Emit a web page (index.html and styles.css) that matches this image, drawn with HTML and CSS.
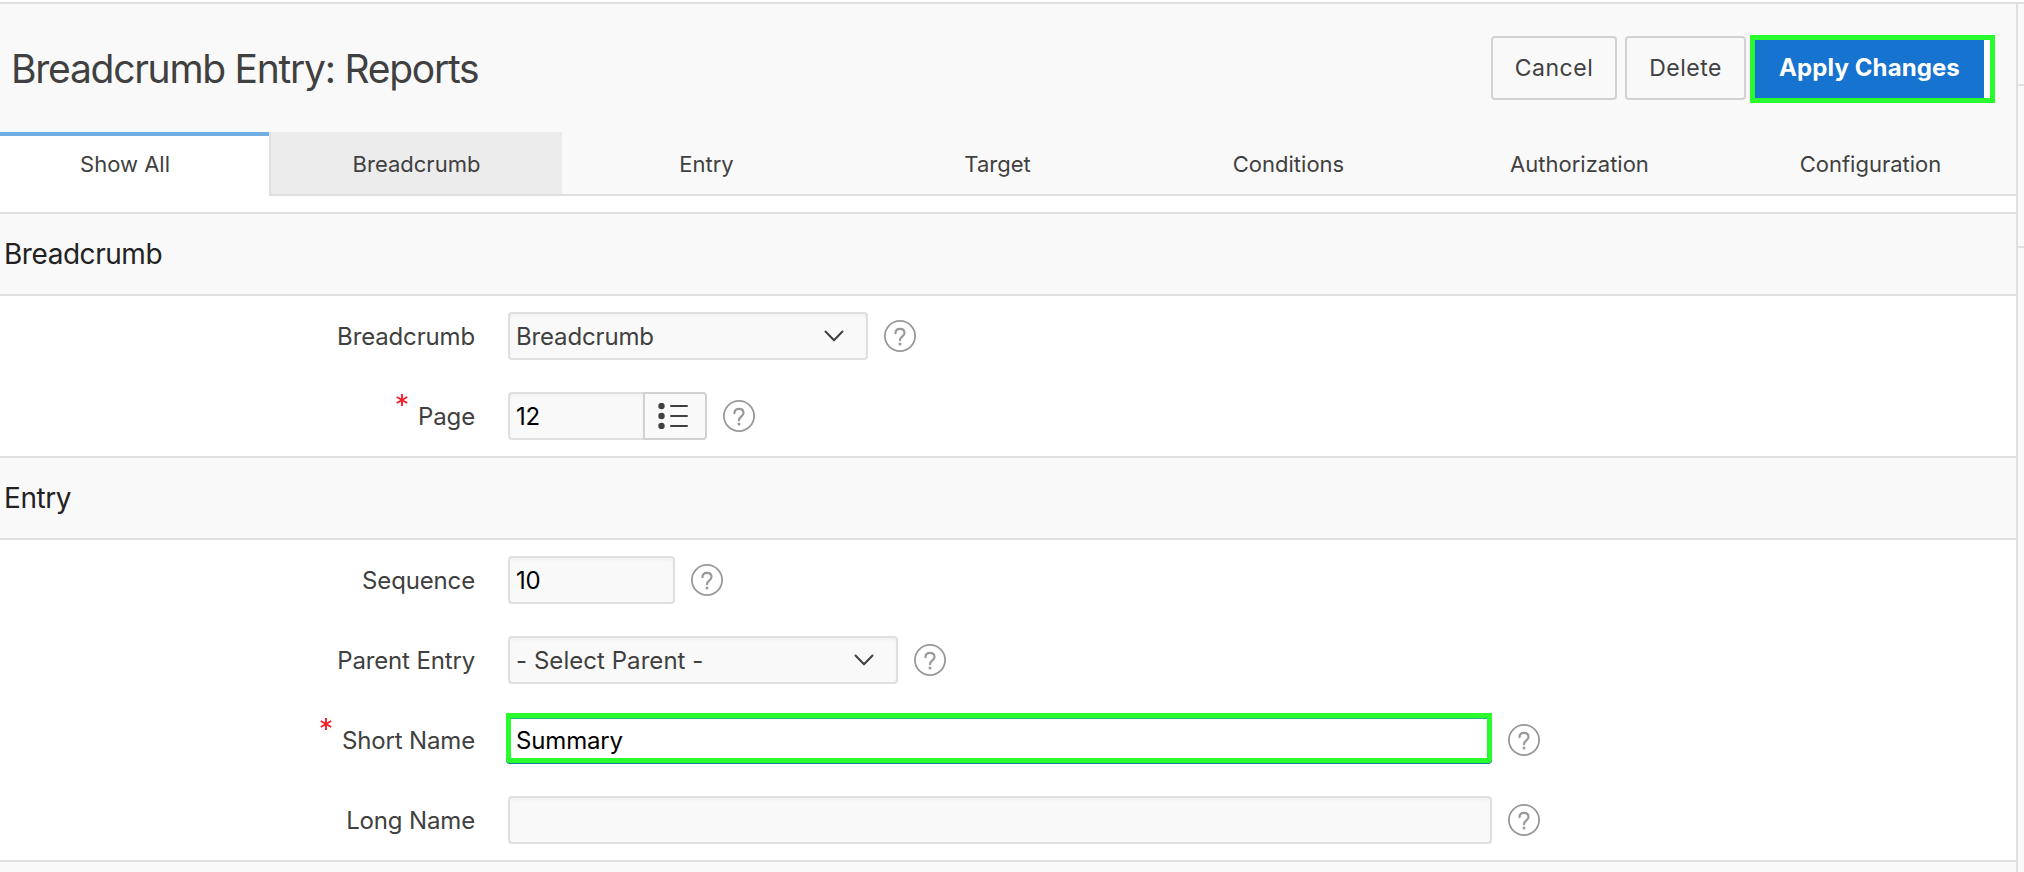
FILE: index.html
```html
<!DOCTYPE html>
<html lang="en">
<head>
<meta charset="utf-8">
<title>Breadcrumb Entry: Reports</title>
<link rel="stylesheet" href="styles.css">
</head>
<body>
<svg class="defs" aria-hidden="true">
  <symbol id="help" viewBox="0 0 32 32"><circle cx="16" cy="16" r="15.1" fill="none" stroke="#999" stroke-width="1.800"/><path d="M11.500 13.200c0-2.700 1.800-4.400 4.500-4.400s4.500 1.700 4.500 4.200c0 3.200-4.500 3.600-4.500 7.200" fill="none" stroke="#999" stroke-width="2.200" stroke-linecap="round"/><circle cx="16" cy="24" r="1.500" fill="#999"/></symbol>
  <symbol id="chevron" viewBox="0 0 20 12"><path d="M1.500 1.500 10 10.300 18.500 1.500" fill="none" stroke="#404040" stroke-width="2" stroke-linecap="round" stroke-linejoin="round"/></symbol>
  <symbol id="star" viewBox="0 0 12 12"><path d="M6 0V12M0.800 3 11.200 9M11.200 3 0.800 9" fill="none" stroke="#f81d2a" stroke-width="1.900"/></symbol>
</svg>
<div class="app">
  <main class="main">
    <header class="header">
      <h1 class="title">Breadcrumb Entry: Reports</h1>
      <div class="actions">
        <button class="btn cancel">Cancel</button>
        <button class="btn delete">Delete</button>
        <div class="marked"><button class="apply">Apply Changes</button></div>
      </div>
    </header>
    <nav class="tabs">
      <a class="tab first">Show All</a>
      <a class="tab hovered">Breadcrumb</a>
      <a class="tab">Entry</a>
      <a class="tab">Target</a>
      <a class="tab">Conditions</a>
      <a class="tab">Authorization</a>
      <a class="tab">Configuration</a>
    </nav>
    <section class="section">
      <h2 class="heading">Breadcrumb</h2>
      <div class="row"><div class="label">Breadcrumb</div><div class="field select w-crumb"><span>Breadcrumb</span><svg class="chevron"><use href="#chevron"/></svg></div><svg class="help"><use href="#help"/></svg></div>
      <div class="row"><div class="label"><svg class="star"><use href="#star"/></svg><span>Page</span></div><div class="field w-page">12</div><button class="list" aria-label="List of pages"><svg width="30" height="26" viewBox="0 0 30 26"><g fill="#404040"><circle cx="3.500" cy="3" r="3.200"/><circle cx="3.500" cy="13" r="3.200"/><circle cx="3.500" cy="23" r="3.200"/></g><path d="M13 3H29M13 13H29M13 23H29" stroke="#404040" stroke-width="2" stroke-linecap="round"/></svg></button><svg class="help"><use href="#help"/></svg></div>
    </section>
    <section class="section">
      <h2 class="heading">Entry</h2>
      <div class="row"><div class="label">Sequence</div><div class="field w-seq">10</div><svg class="help"><use href="#help"/></svg></div>
      <div class="row"><div class="label">Parent Entry</div><div class="field select w-parent"><span>- Select Parent -</span><svg class="chevron"><use href="#chevron"/></svg></div><svg class="help"><use href="#help"/></svg></div>
      <div class="row"><div class="label"><svg class="star"><use href="#star"/></svg><span>Short Name</span></div><div class="field w-long focus">Summary</div><svg class="help"><use href="#help"/></svg></div>
      <div class="row"><div class="label">Long Name</div><div class="field w-long"></div><svg class="help"><use href="#help"/></svg></div>
    </section>
    <div class="next"></div>
  </main>
  <aside class="side"><div class="block one"></div><div class="block two"></div></aside>
</div>
</body>
</html>
```
FILE: styles.css
```css
* { box-sizing: border-box; }
body { margin: 0; background: #fff; color: #404040; font-family: Inter, "Liberation Sans", sans-serif; font-size: 23px; overflow: hidden; }
button { font: inherit; color: inherit; padding: 0; }
.defs { position: absolute; width: 0; height: 0; }
.app { display: flex; height: 870px; margin-top: 2px; border-top: 2px solid #dfdfdf; overflow: hidden; }
.main { width: 2016px; flex: none; }
.side { flex: 1; border-left: 2px solid #dfdfdf; background: #f9f9f9; }
.block { border-bottom: 2px solid #dfdfdf; }
.one { height: 82px; }
.two { height: 162px; }
.header { height: 128px; padding: 31px 21px 0 11px; background: #f9f9f9; display: flex; justify-content: space-between; }
.title { margin: 0; font-size: 39px; line-height: 67px; font-weight: 400; letter-spacing: -1.260px; white-space: nowrap; }
.actions { display: flex; }
.btn { height: 64px; margin-top: 1px; border: 2px solid #d2d2d2; border-radius: 4px; background: #f9f9f9; letter-spacing: 0.500px; }
.cancel { width: 126px; margin-right: 8px; }
.delete { width: 121px; margin-right: 4px; }
.marked { width: 245px; height: 68px; border: 5px solid #29fb2e; background: #fff; display: flex; }
.apply { width: 229px; border: 0; padding-bottom: 3px; background: #1673cf; color: #fff; font-size: 24px; font-weight: 700; letter-spacing: 0.100px; }
.tabs { height: 64px; display: flex; background: #f9f9f9; }
.tab { width: 291px; flex: none; display: flex; align-items: center; justify-content: center; padding: 2px 2px 0 0; border-bottom: 2px solid #dfdfdf; font-size: 22px; }
.first { width: 269px; background: #fff; border-top: 4px solid #70aee4; border-bottom: 0; padding: 0 19px 4px 0; }
.hovered { width: 293px; padding-right: 0; border-left: 2px solid #dfdfdf; background: #ececec; }
.section:first-of-type { margin-top: 16px; }
.heading { margin: 0; height: 84px; padding-left: 4px; border: solid #dfdfdf; border-width: 2px 0; background: #f9f9f9; color: #222; font-size: 28px; line-height: 81px; font-weight: 400; letter-spacing: -0.450px; }
.row { height: 80px; display: flex; align-items: center; font-size: 24px; letter-spacing: -0.150px; }
.label { width: 475px; margin-right: 33px; display: flex; justify-content: flex-end; gap: 10px; }
.star { width: 12px; height: 12px; margin-top: -8px; overflow: visible; }
.field { height: 48px; padding: 0 6px; display: flex; align-items: center; border: 2px solid #dfdfdf; border-radius: 4px; background: #f9f9f9; box-shadow: inset 0 2px 3px rgba(0,0,0,.04); color: #000; white-space: nowrap; }
.select { justify-content: space-between; color: #404040; padding-right: 22px; }
.chevron { width: 20px; height: 12px; }
.w-crumb { width: 360px; }
.w-page { width: 135px; border-right: 0; border-radius: 4px 0 0 4px; }
.w-seq { width: 167px; }
.w-parent { width: 390px; }
.w-parent span { letter-spacing: 0.050px; }
.w-long { width: 984px; }
.list { width: 64px; height: 48px; padding-right: 4px; border: 2px solid #d2d2d2; border-radius: 0 4px 4px 0; background: #f9f9f9; display: flex; align-items: center; justify-content: center; }
.help { width: 32px; height: 32px; margin-left: 16px; }
.focus { width: 986px; height: 50px; margin: -4px 0 0 -2px; padding: 4px 5px 0; border: 5px solid #29fb2e; background: #fff; box-shadow: 0 1px 0 #0f7f9c, inset 0 1px 0 #1db573; border-radius: 0 0 4px 4px; }
.next { height: 40px; border-top: 2px solid #dfdfdf; background: #f9f9f9; }
```
